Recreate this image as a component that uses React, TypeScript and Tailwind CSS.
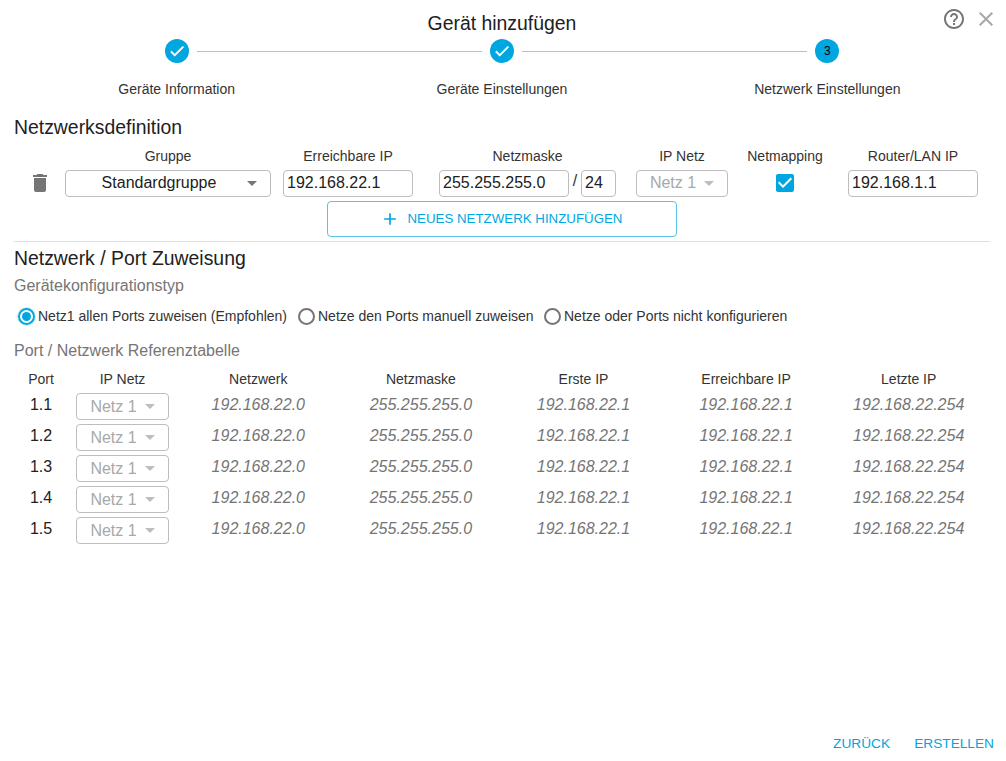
import React from "react";

const rows = ["1.1", "1.2", "1.3", "1.4", "1.5"];

const Check = () => (
  <svg viewBox="0 0 24 24" className="h-[18px] w-[18px] fill-white stroke-white stroke-[0.8]">
    <path d="M9 16.17 4.83 12l-1.42 1.41L9 19 21 7l-1.41-1.41z" />
  </svg>
);

const Arrow = ({ className }: { className: string }) => (
  <span className={`h-0 w-0 border-x-[5.5px] border-t-[5px] border-x-transparent ${className}`} />
);

const NetSelect = ({ width }: { width: string }) => (
  <div className={`flex h-[27px] items-center justify-center gap-2 rounded border border-[#bdbdbd] bg-white text-[#a8a8a8] ${width}`}>
    <span>Netz 1</span>
    <Arrow className="border-t-[#bdbdbd]" />
  </div>
);

const TextBox = ({ value, width }: { value: string; width: string }) => (
  <input
    readOnly
    value={value}
    className={`h-[27px] rounded border border-[#bdbdbd] pl-[3px] text-[#212121] outline-none ${width}`}
  />
);

const Radio = ({ label, width, checked }: { label: string; width: string; checked?: boolean }) => (
  <label className={`flex items-center gap-[3px] text-[#333333] ${width}`}>
    <span
      className={`flex h-[17px] w-[17px] items-center justify-center rounded-full border-2 ${
        checked ? "border-[#00a6e0] shadow-[0_0_0_1px_#cdeef9]" : "border-[#757575]"
      }`}
    >
      {checked && <span className="h-[9px] w-[9px] rounded-full bg-[#00a6e0]" />}
    </span>
    {label}
  </label>
);

const Step = ({ label, children, line }: { label: string; children: React.ReactNode; line?: boolean }) => (
  <div className="flex flex-col items-center">
    <div className="relative flex h-6 w-full justify-center">
      <div className="flex h-6 w-6 items-center justify-center rounded-full bg-[#00a6e0] text-xs text-black">
        {children}
      </div>
      {line && <div className="absolute left-[calc(50%+20px)] top-3 h-px w-[285px] bg-[#bdbdbd]" />}
    </div>
    <div className="mt-4 leading-5 text-[#333333]">{label}</div>
  </div>
);

const HeadCell = ({ children, width }: { children: React.ReactNode; width: string }) => (
  <div className={`text-center leading-5 text-[#333333] ${width}`}>{children}</div>
);

export default function App() {
  return (
    <div className="relative flex h-[761px] w-[1006px] flex-col bg-white pl-[14px] pr-4 pt-[11px] font-['Liberation_Sans',Arial,sans-serif] text-sm">
      <div className="absolute right-2 top-[7px] flex items-center gap-[8px]">
        <svg viewBox="0 0 24 24" className="h-6 w-6 fill-[#757575]">
          <path d="M11 18h2v-2h-2v2zm1-16C6.48 2 2 6.48 2 12s4.48 10 10 10 10-4.48 10-10S17.52 2 12 2zm0 18c-4.41 0-8-3.59-8-8s3.59-8 8-8 8 3.59 8 8-3.59 8-8 8zm0-14c-2.21 0-4 1.79-4 4h2c0-1.1.9-2 2-2s2 .9 2 2c0 2-3 1.75-3 5h2c0-2.25 3-2.5 3-5 0-2.21-1.79-4-4-4z" />
        </svg>
        <svg viewBox="0 0 24 24" className="h-6 w-6 fill-[#a8a8a8]">
          <path d="M19 6.41 17.59 5 12 10.59 6.41 5 5 6.41 10.59 12 5 17.59 6.41 19 12 13.41 17.59 19 19 17.59 13.41 12z" />
        </svg>
      </div>

      <h1 className="text-center text-[19.4px] leading-6 text-[#212121]">Gerät hinzufügen</h1>

      <div className="mt-[4px] grid w-[976px] grid-cols-3">
        <Step label="Geräte Information" line>
          <Check />
        </Step>
        <Step label="Geräte Einstellungen" line>
          <Check />
        </Step>
        <Step label="Netzwerk Einstellungen">3</Step>
      </div>

      <h2 className="mt-4 text-[19.4px] leading-6 text-[#212121]">Netzwerksdefinition</h2>

      <div className="mt-[7px] flex">
        <HeadCell width="ml-[51px] w-[206px]">Gruppe</HeadCell>
        <HeadCell width="ml-3 w-[130px]">Erreichbare IP</HeadCell>
        <HeadCell width="ml-[26px] w-[177px]">Netzmaske</HeadCell>
        <HeadCell width="ml-5 w-[92px]">IP Netz</HeadCell>
        <HeadCell width="w-[114px]">Netmapping</HeadCell>
        <HeadCell width="ml-[6px] w-[130px]">Router/LAN IP</HeadCell>
      </div>

      <div className="mt-[3px] flex items-center text-base">
        <div className="flex w-[51px] pl-[14px]">
          <svg viewBox="0 0 24 24" className="h-6 w-6 fill-[#757575]">
            <path d="M6 19c0 1.1.9 2 2 2h8c1.1 0 2-.9 2-2V7H6v12zM19 4h-3.5l-1-1h-5l-1 1H5v2h14V4z" />
          </svg>
        </div>
        <div className="relative flex h-[27px] w-[206px] items-center justify-center rounded border border-[#bdbdbd] pr-[18px] text-[#212121]">
          Standardgruppe
          <Arrow className="absolute right-[13px] top-[10px] border-t-[#757575]" />
        </div>
        <div className="ml-3 flex">
          <TextBox value="192.168.22.1" width="w-[130px]" />
        </div>
        <div className="ml-[26px] flex items-center">
          <TextBox value="255.255.255.0" width="w-[130px]" />
          <span className="w-3 pb-1 text-center text-[#333333]">/</span>
          <TextBox value="24" width="w-[35px]" />
        </div>
        <div className="ml-5">
          <NetSelect width="w-[92px]" />
        </div>
        <div className="flex w-[114px] justify-center">
          <svg viewBox="0 0 24 24" className="h-6 w-6 fill-[#00a6e0]">
            <path d="M19 3H5c-1.11 0-2 .9-2 2v14c0 1.1.89 2 2 2h14c1.1 0 2-.9 2-2V5c0-1.1-.9-2-2-2zm-9 14-5-5 1.41-1.41L10 14.17l7.59-7.59L19 8l-9 9z" />
          </svg>
        </div>
        <div className="ml-[6px] flex">
          <TextBox value="192.168.1.1" width="w-[130px]" />
        </div>
      </div>

      <button className="ml-[313px] mt-1 flex h-9 w-[350px] items-center justify-center gap-2 rounded border border-[#5cc1e8] pr-[2px] text-[13.3px] text-[#00a6e0]">
        <svg viewBox="0 0 24 24" className="h-5 w-5 fill-[#00a6e0]">
          <path d="M19 13h-6v6h-2v-6H5v-2h6V5h2v6h6v2z" />
        </svg>
        NEUES NETZWERK HINZUFÜGEN
      </button>

      <hr className="mt-1 border-[#e0e0e0]" />

      <h2 className="mt-[4px] text-[19.4px] leading-6 text-[#212121]">Netzwerk / Port Zuweisung</h2>
      <div className="mt-1 text-base leading-6 text-[#757575]">Gerätekonfigurationstyp</div>

      <div className="ml-1 mt-2 flex h-5 items-center">
        <Radio label="Netz1 allen Ports zuweisen (Empfohlen)" width="w-[280px]" checked />
        <Radio label="Netze den Ports manuell zuweisen" width="w-[246px]" />
        <Radio label="Netze oder Ports nicht konfigurieren" width="w-[250px]" />
      </div>

      <div className="mt-[13px] text-base leading-6 text-[#757575]">Port / Netzwerk Referenztabelle</div>

      <div className="mt-[6px] grid w-[976px] grid-cols-[54px_109px_repeat(5,1fr)] text-center leading-5 text-[#333333]">
        <div>Port</div>
        <div>IP Netz</div>
        <div>Netzwerk</div>
        <div>Netzmaske</div>
        <div>Erste IP</div>
        <div>Erreichbare IP</div>
        <div>Letzte IP</div>
      </div>

      <div className="flex flex-col gap-1 pt-1">
        {rows.map((port) => (
          <div
            key={port}
            className="grid w-[976px] grid-cols-[54px_109px_repeat(5,1fr)] text-center text-base leading-6"
          >
            <div className="text-[#212121]">{port}</div>
            <div className="flex justify-center">
              <NetSelect width="w-[93px]" />
            </div>
            <div className="italic text-[#757575]">192.168.22.0</div>
            <div className="italic text-[#757575]">255.255.255.0</div>
            <div className="italic text-[#757575]">192.168.22.1</div>
            <div className="italic text-[#757575]">192.168.22.1</div>
            <div className="italic text-[#757575]">192.168.22.254</div>
          </div>
        ))}
      </div>

      <div className="mb-[7px] mr-[-4px] mt-auto flex justify-end gap-6 text-[13.7px] leading-5 text-[#00a6e0]">
        <span>ZURÜCK</span>
        <span>ERSTELLEN</span>
      </div>
    </div>
  );
}
